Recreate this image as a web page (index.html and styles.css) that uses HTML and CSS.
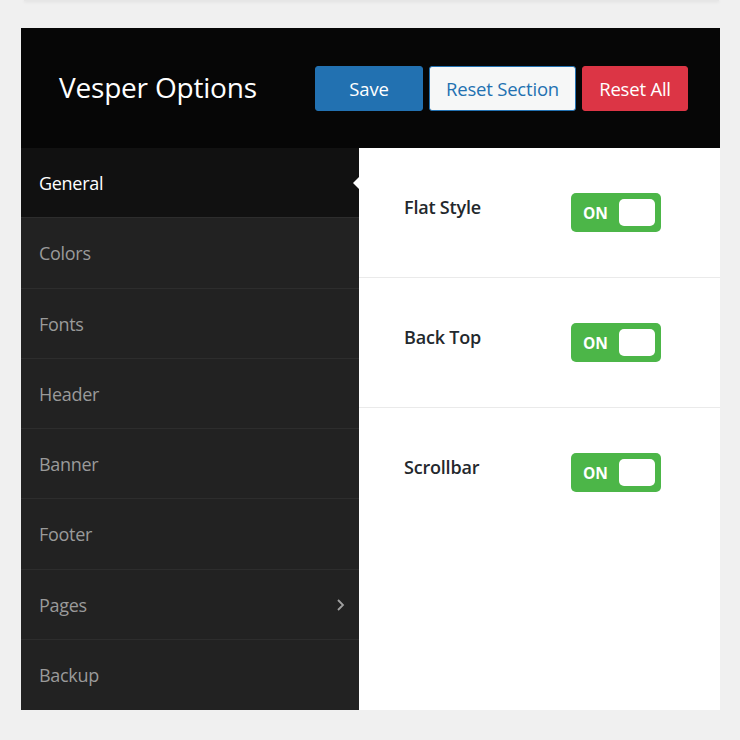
FILE: index.html
```html
<!DOCTYPE html>
<html>
<head>
<meta charset="utf-8">
<link rel="stylesheet" href="styles.css">
</head>
<body>
<div class="topcard"></div>
<div class="panel">
  <header class="head">
    <h1 class="title">Vesper Options</h1>
    <div class="actions">
      <button class="btn btn-save">Save</button>
      <button class="btn btn-section">Reset Section</button>
      <button class="btn btn-all">Reset All</button>
    </div>
  </header>
  <div class="body">
    <nav class="side">
      <div class="item active">General</div>
      <div class="item">Colors</div>
      <div class="item">Fonts</div>
      <div class="item">Header</div>
      <div class="item">Banner</div>
      <div class="item">Footer</div>
      <div class="item has-sub">Pages<svg class="chev" width="9" height="14" viewBox="0 0 9 14"><path d="M2 2l5 5-5 5" fill="none" stroke="#a0a0a0" stroke-width="1.8"/></svg></div>
      <div class="item">Backup</div>
    </nav>
    <main class="content">
      <div class="row">
        <span class="label">Flat Style</span>
        <span class="toggle"><span class="on">ON</span><span class="knob"></span></span>
      </div>
      <div class="row">
        <span class="label">Back Top</span>
        <span class="toggle"><span class="on">ON</span><span class="knob"></span></span>
      </div>
      <div class="row last">
        <span class="label">Scrollbar</span>
        <span class="toggle"><span class="on">ON</span><span class="knob"></span></span>
      </div>
    </main>
  </div>
</div>
</body>
</html>
```
FILE: styles.css
```css
* { box-sizing: border-box; }
body {
  margin: 0;
  background: #f0f0f0;
  font-family: "Open Sans", "Noto Sans", sans-serif;
}
.topcard {
  height: 1px;
  margin: 0 21px 0 24px;
  background: #e6e6e6;
  box-shadow: 0 1px 3px rgba(0,0,0,0.12);
}
.panel {
  margin: 27px 20px 0 21px;
  width: 699px;
}
.head {
  height: 120px;
  background: #060606;
  display: flex;
  align-items: center;
  justify-content: space-between;
  padding: 0 32px 0 38px;
}
.title {
  margin: 0;
  color: #fff;
  font-weight: 400;
  font-size: 28px;
  letter-spacing: -0.2px;
  padding-bottom: 2px;
}
.actions {
  display: flex;
  gap: 6px;
  padding-top: 1px;
}
.btn {
  font-family: inherit;
  height: 45px;
  border-radius: 3px;
  font-size: 18.5px;
  letter-spacing: -0.2px;
  border: 1px solid transparent;
  cursor: pointer;
  padding: 0;
}
.btn-save { width: 108px; background: #2271b1; color: #fff; border-color: #2271b1; }
.btn-section { width: 147px; background: #f6f7f7; color: #2271b1; border-color: #2271b1; }
.btn-all { width: 106px; background: #dc3545; color: #fff; border-color: #dc3545; }
.body {
  display: flex;
  height: 562px;
}
.side {
  width: 338px;
  background: #222;
}
.item {
  position: relative;
  height: 70.25px;
  display: flex;
  align-items: center;
  justify-content: space-between;
  padding: 1px 14px 0 18px;
  color: #9a9a9a;
  font-size: 18px;
  letter-spacing: -0.3px;
  border-bottom: 1px solid #2d2d2d;
}
.item:last-child { border-bottom: none; }
.item.active {
  background: #111;
  color: #fff;
}
.item.active::after {
  content: "";
  position: absolute;
  right: 0;
  top: 29px;
  border-style: solid;
  border-width: 6px 6px 6px 0;
  border-color: transparent #fff transparent transparent;
}
.content {
  flex: 1;
  background: #fff;
}
.row {
  height: 130px;
  border-bottom: 1px solid #eaeaea;
  display: flex;
  align-items: flex-start;
  padding: 45px 0 0 45px;
}
.row.last { border-bottom: none; }
.label {
  width: 167px;
  font-size: 18px;
  font-weight: 600;
  color: #23282d;
  letter-spacing: -0.2px;
  line-height: 28px;
}
.toggle {
  width: 90px;
  height: 39px;
  background: #4cb648;
  border-radius: 5px;
  display: flex;
  align-items: center;
  justify-content: space-between;
  padding: 0 6px 0 12px;
}
.on {
  color: #fff;
  font-weight: 700;
  font-size: 15.5px;
}
.knob {
  width: 36px;
  height: 27px;
  background: #fff;
  border-radius: 5px;
}
```
